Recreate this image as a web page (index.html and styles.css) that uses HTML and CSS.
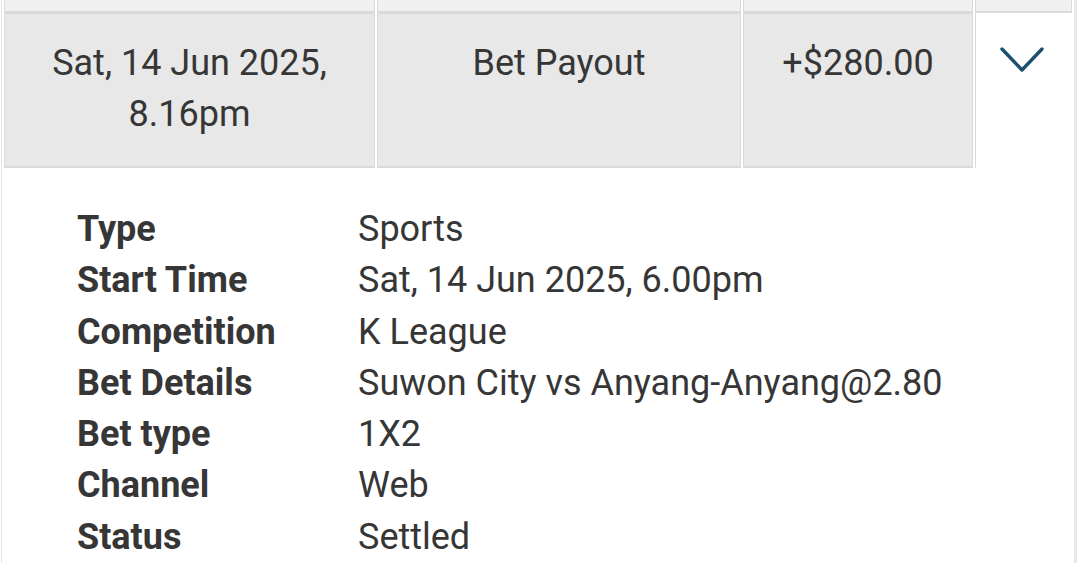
FILE: index.html
```html
<!DOCTYPE html>
<html>
<head>
<meta charset="utf-8">
<link rel="stylesheet" href="styles.css">
</head>
<body>
<div class="frame">
  <div class="row prev">
    <div class="cell c1"></div>
    <div class="cell c2"></div>
    <div class="cell c3"></div>
    <div class="cell c4"></div>
  </div>
  <div class="row current">
    <div class="cell c1">Sat, 14 Jun 2025,<br>8.16pm</div>
    <div class="cell c2">Bet Payout</div>
    <div class="cell c3">+$280.00</div>
    <div class="cell c4 toggle">
      <svg class="chev" width="44" height="26" viewBox="0 0 44 26">
        <polyline points="2,2 22,23 42,2" fill="none" stroke="#1d4f6f" stroke-width="3.4" stroke-linecap="round" stroke-linejoin="round"/>
      </svg>
    </div>
  </div>
  <div class="details">
    <div class="label">Type</div><div class="value">Sports</div>
    <div class="label">Start Time</div><div class="value">Sat, 14 Jun 2025, 6.00pm</div>
    <div class="label">Competition</div><div class="value">K League</div>
    <div class="label">Bet Details</div><div class="value">Suwon City vs Anyang-Anyang@2.80</div>
    <div class="label">Bet type</div><div class="value">1X2</div>
    <div class="label">Channel</div><div class="value">Web</div>
    <div class="label">Status</div><div class="value">Settled</div>
  </div>
</div>
</body>
</html>
```

FILE: styles.css
```css
html, body {
  margin: 0;
  padding: 0;
  background: #ffffff;
  overflow: hidden;
}
body {
  font-family: Roboto, "Liberation Sans", sans-serif;
  color: #363636;
}
.frame {
  margin-left: 1px;
  width: 1068px;
  height: 563px;
  padding: 0 2px;
  border-left: 1px solid #e2e2e2;
  border-right: 4px solid #e8e8e8;
}
.row {
  display: flex;
  gap: 2px;
}
.cell {
  box-sizing: border-box;
  border: 1px solid #dadada;
  text-align: center;
  font-size: 36px;
  line-height: 51px;
}
.c1 { width: 371px; }
.c2 { width: 364px; }
.c3 { width: 230px; }
.c4 { width: 97px; }
.prev .cell {
  height: 13px;
  background: #f0f0f0;
  border-width: 0 1px 2px 1px;
}
.current .cell {
  background: #e8e8e8;
  padding: 24px 0 26px;
  border-width: 1px 1px 2px 1px;
}
.current .toggle {
  background: #ffffff;
  border: none;
  border-left: 1px solid #dadada;
  padding: 34px 0 0 0;
  display: flex;
  justify-content: center;
  align-items: flex-start;
}
.chev {
  display: block;
  margin-left: -4px;
}
.details {
  display: grid;
  grid-template-columns: 281px auto;
  padding: 36px 0 0 73px;
  font-size: 36px;
  line-height: 51.3px;
}
.label {
  font-weight: 700;
}
.value {
  font-weight: 400;
}
```
